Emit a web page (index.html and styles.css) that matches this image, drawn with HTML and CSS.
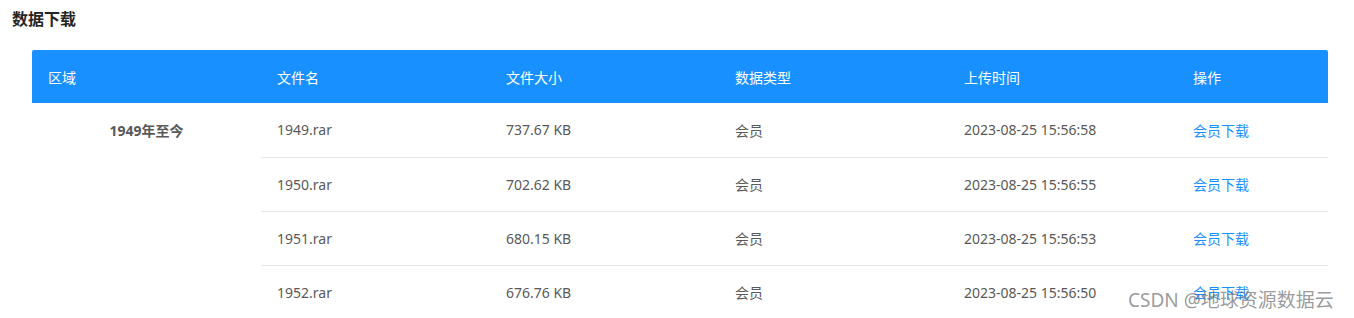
FILE: index.html
```html
<!DOCTYPE html>
<html lang="zh-CN">
<head>
<meta charset="utf-8">
<link rel="stylesheet" href="styles.css">
</head>
<body>
<div class="page">
  <h2 class="title">数据下载</h2>
  <div class="table-wrap">
    <table class="data-table">
      <colgroup>
        <col class="c1"><col class="c2"><col class="c3"><col class="c4"><col class="c5"><col class="c6">
      </colgroup>
      <thead>
        <tr><th>区域</th><th>文件名</th><th>文件大小</th><th>数据类型</th><th>上传时间</th><th>操作</th></tr>
      </thead>
      <tbody>
        <tr>
          <td class="region" rowspan="4">1949年至今</td>
          <td>1949.rar</td><td>737.67 KB</td><td>会员</td><td>2023-08-25 15:56:58</td><td><a class="link">会员下载</a></td>
        </tr>
        <tr><td>1950.rar</td><td>702.62 KB</td><td>会员</td><td>2023-08-25 15:56:55</td><td><a class="link">会员下载</a></td></tr>
        <tr><td>1951.rar</td><td>680.15 KB</td><td>会员</td><td>2023-08-25 15:56:53</td><td><a class="link">会员下载</a></td></tr>
        <tr><td>1952.rar</td><td>676.76 KB</td><td>会员</td><td>2023-08-25 15:56:50</td><td><a class="link">会员下载</a></td></tr>
      </tbody>
    </table>
  </div>
  <div class="watermark">CSDN @地球资源数据云</div>
</div>
</body>
</html>
```
FILE: styles.css
```css
html, body {
  margin: 0;
  padding: 0;
  background: #fff;
}
body {
  font-family: "Noto Sans", "Noto Sans CJK SC", sans-serif;
  font-size: 14px;
  color: #595959;
  overflow: hidden;
}
.page {
  position: relative;
  padding: 8px 26px 0 12px;
  height: 318px;
  box-sizing: border-box;
}
.title {
  margin: 0;
  font-size: 16px;
  font-weight: 700;
  color: #262626;
  line-height: 22px;
}
.table-wrap {
  margin: 20px 0 0 20px;
}
.data-table {
  width: 1296px;
  border-collapse: collapse;
  table-layout: fixed;
}
.c1, .c2, .c3, .c4, .c5 { width: 229px; }
.c6 { width: 151px; }
.data-table th {
  background: #1890ff;
  color: #fff;
  font-weight: 400;
  text-align: left;
  height: 53px;
  padding: 0 16px;
  box-sizing: border-box;
}
.data-table thead tr th:first-child { border-top-left-radius: 2px; }
.data-table thead tr th:last-child { border-top-right-radius: 2px; }
.data-table td {
  height: 54px;
  padding: 0 16px;
  box-sizing: border-box;
  border-bottom: 1px solid #e8e8e8;
  vertical-align: middle;
}
.data-table td.region {
  text-align: center;
  vertical-align: top;
  padding-top: 17px;
  font-weight: 700;
  border-bottom: none;
}
.link {
  color: #1890ff;
  font-size: 14px;
  text-decoration: none;
}
.watermark {
  position: absolute;
  left: 1128px;
  top: 285px;
  font-size: 19px;
  color: rgba(110, 110, 110, 0.7);
  white-space: nowrap;
}
```
